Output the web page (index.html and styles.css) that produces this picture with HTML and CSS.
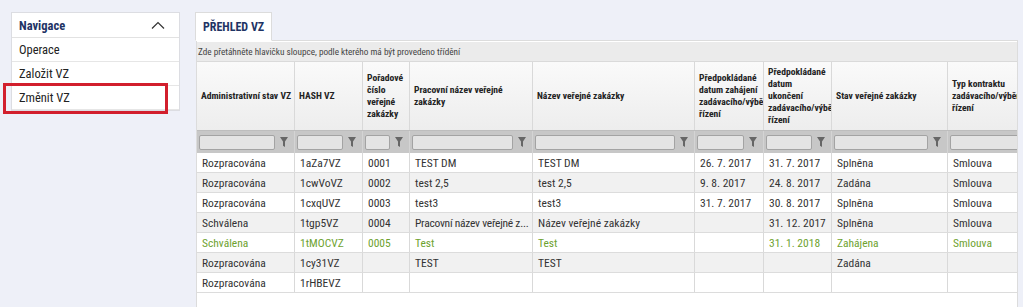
FILE: index.html
```html
<!DOCTYPE html>
<html lang="cs">
<head>
<meta charset="utf-8">
<title>Přehled VZ</title>
<link rel="stylesheet" href="styles.css">
</head>
<body>
<div class="page">
  <aside class="nav">
    <div class="nav-head">
      <span class="nav-title">Navigace</span>
      <svg class="chevron" width="14" height="8" viewBox="0 0 14 8"><polyline points="1,7.5 7,1.5 13,7.5" fill="none" stroke="#333" stroke-width="1.2"/></svg>
    </div>
    <div class="nav-item">Operace</div>
    <div class="nav-item">Založit VZ</div>
    <div class="nav-item">Změnit VZ</div>
    <div class="highlight"></div>
  </aside>

  <main class="main">
    <div class="tabs"><div class="tab">PŘEHLED VZ</div></div>
    <div class="panel">
      <div class="grid">
        <div class="group-panel">Zde přetáhněte hlavičku sloupce, podle kterého má být provedeno třídění</div>
        <div class="row head">
          <div class="cell"><div class="label">Administrativní stav VZ</div></div>
          <div class="cell"><div class="label">HASH VZ</div></div>
          <div class="cell"><div class="label">Pořadové číslo veřejné zakázky</div></div>
          <div class="cell"><div class="label">Pracovní název veřejné zakázky</div></div>
          <div class="cell"><div class="label">Název veřejné zakázky</div></div>
          <div class="cell"><div class="label">Předpokládané datum zahájení <span class="nw">zadávacího/výběrového</span> řízení</div></div>
          <div class="cell"><div class="label narrow">Předpokládané datum ukončení <span class="nw">zadávacího/výběrového</span> řízení</div></div>
          <div class="cell"><div class="label">Stav veřejné zakázky</div></div>
          <div class="cell"><div class="label">Typ kontraktu <span class="nw">zadávacího/výběrového</span> řízení</div></div>
        </div>
        <div class="row filter">
          <div class="cell"><span class="box"></span><svg class="funnel" width="8" height="10" viewBox="0 0 8 10"><path d="M0 0H8L5 4.5V10L3 8.8V4.5Z"/></svg></div>
          <div class="cell"><span class="box"></span><svg class="funnel" width="8" height="10" viewBox="0 0 8 10"><path d="M0 0H8L5 4.5V10L3 8.8V4.5Z"/></svg></div>
          <div class="cell"><span class="box"></span><svg class="funnel" width="8" height="10" viewBox="0 0 8 10"><path d="M0 0H8L5 4.5V10L3 8.8V4.5Z"/></svg></div>
          <div class="cell"><span class="box"></span><svg class="funnel" width="8" height="10" viewBox="0 0 8 10"><path d="M0 0H8L5 4.5V10L3 8.8V4.5Z"/></svg></div>
          <div class="cell"><span class="box"></span><svg class="funnel" width="8" height="10" viewBox="0 0 8 10"><path d="M0 0H8L5 4.5V10L3 8.8V4.5Z"/></svg></div>
          <div class="cell"><span class="box"></span><svg class="funnel" width="8" height="10" viewBox="0 0 8 10"><path d="M0 0H8L5 4.5V10L3 8.8V4.5Z"/></svg></div>
          <div class="cell"><span class="box"></span><svg class="funnel" width="8" height="10" viewBox="0 0 8 10"><path d="M0 0H8L5 4.5V10L3 8.8V4.5Z"/></svg></div>
          <div class="cell"><span class="box"></span><svg class="funnel" width="8" height="10" viewBox="0 0 8 10"><path d="M0 0H8L5 4.5V10L3 8.8V4.5Z"/></svg></div>
          <div class="cell"><span class="box"></span><svg class="funnel" width="8" height="10" viewBox="0 0 8 10"><path d="M0 0H8L5 4.5V10L3 8.8V4.5Z"/></svg></div>
        </div>
        <div class="row data">
          <div class="cell">Rozpracována</div><div class="cell">1aZa7VZ</div><div class="cell">0001</div><div class="cell">TEST DM</div><div class="cell">TEST DM</div><div class="cell">26. 7. 2017</div><div class="cell">31. 7. 2017</div><div class="cell">Splněna</div><div class="cell">Smlouva</div>
        </div>
        <div class="row data alt">
          <div class="cell">Rozpracována</div><div class="cell">1cwVoVZ</div><div class="cell">0002</div><div class="cell">test 2,5</div><div class="cell">test 2,5</div><div class="cell">9. 8. 2017</div><div class="cell">24. 8. 2017</div><div class="cell">Zadána</div><div class="cell">Smlouva</div>
        </div>
        <div class="row data">
          <div class="cell">Rozpracována</div><div class="cell">1cxqUVZ</div><div class="cell">0003</div><div class="cell">test3</div><div class="cell">test3</div><div class="cell">31. 7. 2017</div><div class="cell">30. 8. 2017</div><div class="cell">Splněna</div><div class="cell">Smlouva</div>
        </div>
        <div class="row data alt">
          <div class="cell">Schválena</div><div class="cell">1tgp5VZ</div><div class="cell">0004</div><div class="cell"><span class="tight">Pracovní název veřejné z...</span></div><div class="cell">Název veřejné zakázky</div><div class="cell"></div><div class="cell">31. 12. 2017</div><div class="cell">Splněna</div><div class="cell">Smlouva</div>
        </div>
        <div class="row data selected">
          <div class="cell">Schválena</div><div class="cell">1tMOCVZ</div><div class="cell">0005</div><div class="cell">Test</div><div class="cell">Test</div><div class="cell"></div><div class="cell">31. 1. 2018</div><div class="cell">Zahájena</div><div class="cell">Smlouva</div>
        </div>
        <div class="row data alt">
          <div class="cell">Rozpracována</div><div class="cell">1cy31VZ</div><div class="cell"></div><div class="cell">TEST</div><div class="cell">TEST</div><div class="cell"></div><div class="cell"></div><div class="cell">Zadána</div><div class="cell"></div>
        </div>
        <div class="row data">
          <div class="cell">Rozpracována</div><div class="cell">1rHBEVZ</div><div class="cell"></div><div class="cell"></div><div class="cell"></div><div class="cell"></div><div class="cell"></div><div class="cell"></div><div class="cell"></div>
        </div>
      </div>
    </div>
  </main>
</div>
</body>
</html>
```

FILE: styles.css
```css
* { box-sizing: border-box; }

html, body {
  margin: 0;
  padding: 0;
}

body {
  width: 1023px;
  height: 307px;
  overflow: hidden;
  background: #eef0f8;
  font-family: "Roboto Condensed", "Liberation Sans Narrow", "Arial Narrow", "DejaVu Sans Condensed", Roboto, sans-serif;
  color: #2b2b2b;
}

.page {
  display: flex;
  align-items: flex-start;
  gap: 16px;
  padding: 12px 5px 0 11px;
}

/* navigation */
.nav {
  position: relative;
  width: 169px;
  flex: none;
  background: #fff;
  border: 1px solid #dcdde2;
}

.nav-head {
  height: 25px;
  display: flex;
  align-items: center;
  justify-content: space-between;
  padding: 0 14px 0 7px;
  border-bottom: 1px solid #e2e2e2;
}

.nav-title {
  font-weight: bold;
  font-size: 12.5px;
  color: #1e3364;
}

.chevron { display: block; }

.nav-item {
  height: 24px;
  display: flex;
  align-items: center;
  padding-left: 7px;
  font-size: 12.5px;
  color: #222;
  border-bottom: 1px solid #e6e6e6;
}
.nav-item:last-of-type { border-bottom: none; }

.highlight {
  position: absolute;
  left: -9px;
  top: 70px;
  width: 165px;
  height: 31px;
  border: 3px solid #d21f2d;
}

/* main */
.main {
  flex: 1;
  min-width: 0;
}

.tabs {
  display: flex;
}

.tab {
  height: 29px;
  margin-bottom: -1px;
  margin-left: -1px;
  padding: 0 7px;
  display: flex;
  align-items: center;
  background: #fff;
  border: 1px solid #dcdcdc;
  border-bottom-color: #fff;
  font-weight: bold;
  font-size: 12px;
  color: #1e3364;
  position: relative;
}

.panel {
  background: #fff;
  border: 1px solid #dcdcdc;
  border-bottom: none;
  padding-top: 1px;
  height: 300px;
  overflow: hidden;
}

.grid {
  width: 100%;
  overflow: hidden;
}

.group-panel {
  height: 20px;
  display: flex;
  align-items: center;
  padding-left: 1px;
  background: #ebebeb;
  border-bottom: 1px solid #dadada;
  font-size: 9.2px;
  color: #444;
  white-space: nowrap;
}

.row {
  display: grid;
  grid-template-columns: 98px 68px 47px 123px 162px 69px 68px 116px 110px;
}

.cell {
  border-right: 1px solid #d9d9d9;
  overflow: hidden;
}

.head {
  height: 68px;
  background: linear-gradient(#fafafa, #ededed);
}
.head .cell {
  display: flex;
  align-items: center;
  padding: 0 1px 0 4px;
}
.label {
  min-width: 0;
  width: 100%;
  font-weight: bold;
  font-size: 9.6px;
  line-height: 12px;
  color: #222;
}
.label.narrow { padding-right: 8px; }
.nw { white-space: nowrap; }

.filter {
  height: 23px;
  background: #c7c7c7;
  border-top: 1px solid #bdbdbd;
}
.filter .cell {
  display: flex;
  align-items: center;
  padding-left: 2px;
  border-right-color: #d4d4d4;
}
.box {
  flex: 1;
  height: 15px;
  background: #e4e4e4;
  border: 1px solid #a3a3a3;
  border-radius: 2px;
}
.funnel {
  flex: none;
  margin: 0 6px 0 5px;
  fill: #666;
}

.data {
  height: 20px;
  background: #fff;
  border-bottom: 1px solid #dcdcdc;
}
.data.alt { background: #f1f1f1; }
.data .cell {
  display: flex;
  align-items: center;
  padding-left: 5px;
  font-size: 11.5px;
  color: #333;
  white-space: nowrap;
}
.tight { letter-spacing: -0.25px; }
.data.selected .cell { color: #6ea22f; }
```
